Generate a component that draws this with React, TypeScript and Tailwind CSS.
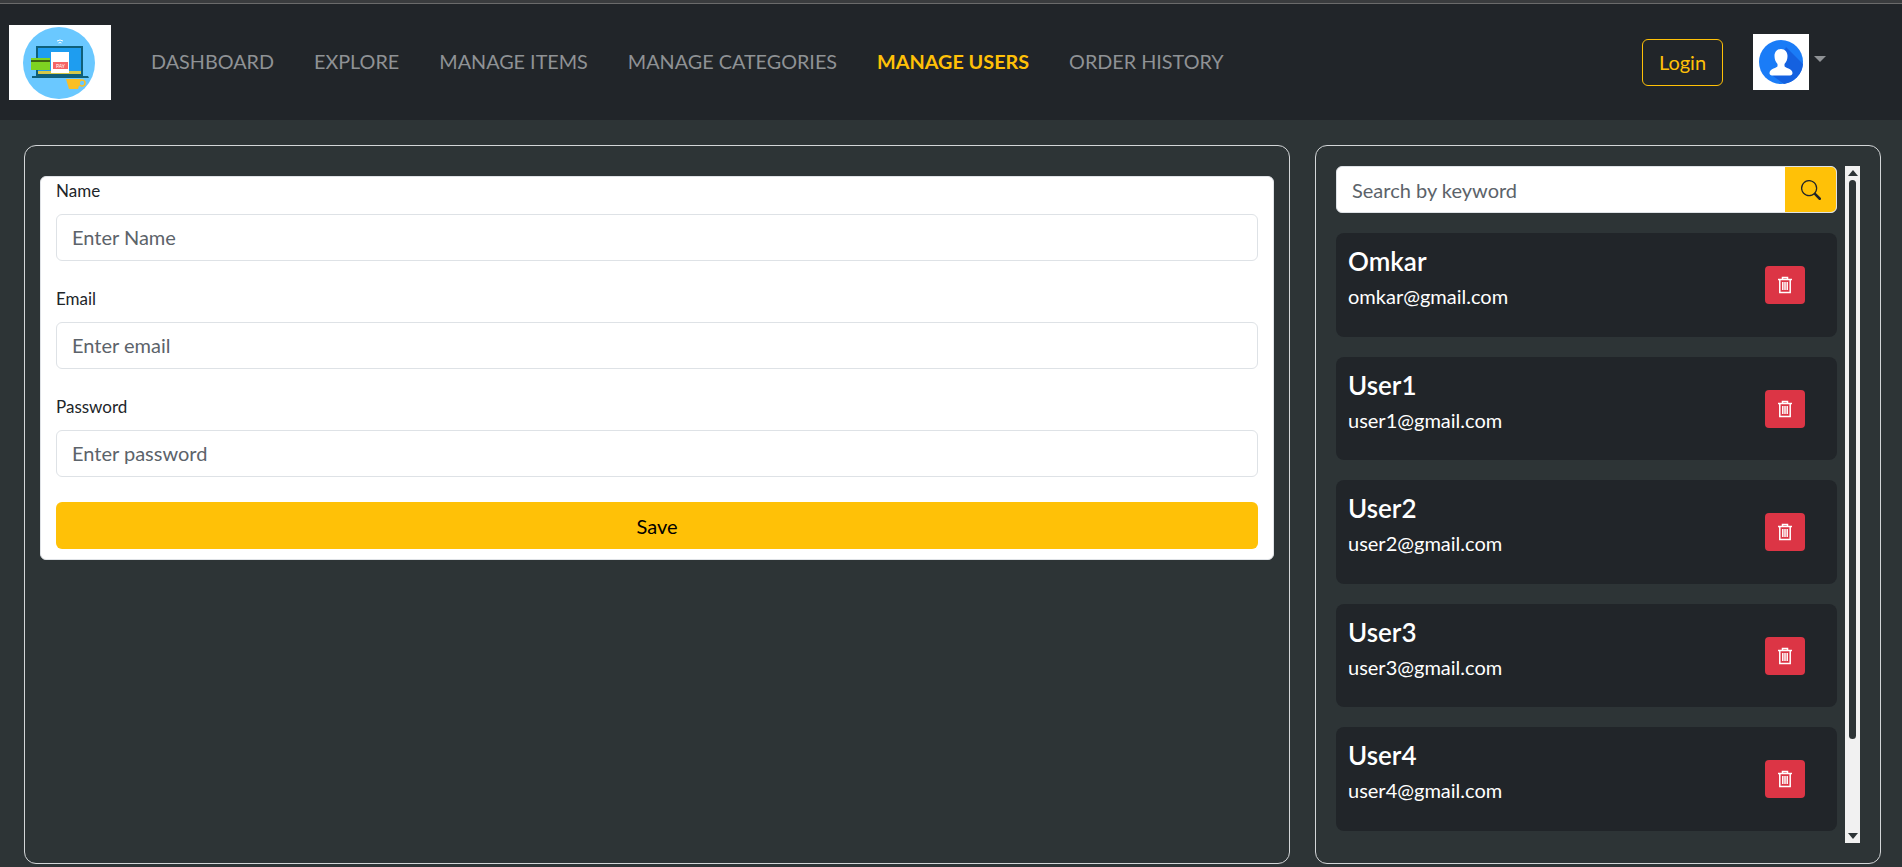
import { BsSearch } from "react-icons/bs";

const navLinks = ["DASHBOARD", "EXPLORE", "MANAGE ITEMS", "MANAGE CATEGORIES", "MANAGE USERS", "ORDER HISTORY"];

const users = [
  { name: "Omkar", email: "omkar@gmail.com" },
  { name: "User1", email: "user1@gmail.com" },
  { name: "User2", email: "user2@gmail.com" },
  { name: "User3", email: "user3@gmail.com" },
  { name: "User4", email: "user4@gmail.com" },
];

const fields = [
  { label: "Name", placeholder: "Enter Name" },
  { label: "Email", placeholder: "Enter email" },
  { label: "Password", placeholder: "Enter password" },
];

function Logo() {
  return (
    <svg viewBox="0 0 102 75" className="w-[102px] h-[75px] bg-white shrink-0">
      <circle cx="50" cy="38" r="36" fill="#6ac8ff" />
      <path d="M48 16q3-2 6 0M49.500 18q1.500-1 3 0" stroke="#fff" strokeWidth="1" fill="none" />
      <rect x="27" y="21" width="47" height="30" fill="#0e5f7a" />
      <rect x="29" y="23" width="43" height="26" fill="#1e9df0" />
      <rect x="29" y="46" width="43" height="3" fill="#d4c84a" />
      <path d="M23 51h56l1 2H23z" fill="#0e5f7a" />
      <rect x="22" y="33" width="19" height="12" fill="#7ed321" />
      <rect x="22" y="35" width="19" height="2" fill="#3f6212" />
      <rect x="42" y="27" width="18" height="21" fill="#fff" />
      <rect x="44" y="37" width="15" height="7" fill="#f56565" />
      <text x="51.500" y="43" fontSize="5" fill="#fff" textAnchor="middle">PAY</text>
      <path d="M57 54h15l-3 10h-9z" fill="#fbbf24" />
      <circle cx="73" cy="58" r="3" stroke="#fbbf24" strokeWidth="1.500" fill="none" />
    </svg>
  );
}

function Avatar() {
  return (
    <svg viewBox="0 0 56 56" className="w-14 h-14 bg-white shrink-0">
      <circle cx="28" cy="28" r="22" fill="#1a7cf7" />
      <path d="M33 13 50 30a22 22 0 0 1-19 20L20 42z" fill="#1461e0" />
      <path d="M28 15c-4 0-6.500 3-6.500 7 0 3 1 6 3 8v2c0 2-8 2.500-8 7 0 1.500 1 2.500 2.500 2.500h18c1.500 0 2.500-1 2.500-2.500 0-4.500-8-5-8-7v-2c2-2 3-5 3-8 0-4-2.500-7-6.500-7z" fill="#fff" />
    </svg>
  );
}

function TrashIcon() {
  return (
    <svg viewBox="0 0 16 18" className="w-4 h-[18px]" fill="none" stroke="#fff" strokeWidth="1.500">
      <path d="M1 3.500h14M5.500 3.500V1.500h5v2M2.800 3.500v13h10.400v-13M5.800 6v8M8 6v8M10.200 6v8" />
    </svg>
  );
}

function UserCard({ name, email }: { name: string; email: string }) {
  return (
    <div className="h-[103.6px] shrink-0 bg-[#212529] rounded-lg pl-3 pr-8 pt-2.5 flex items-start justify-between text-white">
      <div>
        <h5 className="text-[26px] leading-[36px] font-semibold">{name}</h5>
        <p className="text-[20px] leading-[27px] mt-1">{email}</p>
      </div>
      <button className="w-10 h-[38px] mt-[23px] bg-[#dc3545] rounded flex items-center justify-center">
        <TrashIcon />
      </button>
    </div>
  );
}

export default function App() {
  return (
    <div className="h-[867px] overflow-hidden flex flex-col bg-[#2d3436] font-['Lato','Liberation_Sans',sans-serif]">
      <div className="h-[4px] shrink-0 bg-[#3a3c3e] border-b border-[#6b6b6b]" />

      {/* Navbar */}
      <nav className="h-[116px] shrink-0 bg-[#212529] flex items-center pl-[9px] pr-[76px]">
        <Logo />
        <ul className="flex items-center gap-10 ml-10 text-[19.8px] text-[#8f9295]">
          {navLinks.map((link) => (
            <li key={link} className={link === "MANAGE USERS" ? "text-[#ffc107] font-bold" : ""}>
              {link}
            </li>
          ))}
        </ul>
        <div className="ml-auto flex items-center">
          <button className="w-[81px] h-[47px] border border-[#ffc107] rounded-md text-[#ffc107] text-[20px]">Login</button>
          <div className="ml-[30px]">
            <Avatar />
          </div>
          <span className="ml-[5px] w-0 h-0 border-x-[6px] border-x-transparent border-t-[6px] border-t-[#8f9295] -mt-[6px]" />
        </div>
      </nav>

      <main className="flex-1 flex gap-[25px] pt-[25px] pb-[3px] pl-6 pr-[21px] min-h-0">
        {/* Form panel */}
        <section className="w-[1266px] border border-[#d3d6d8] rounded-xl pt-[30px] px-[15px]">
          <form className="bg-white rounded-md h-[384px] px-[15px] border border-[#dfe2e6]">
            {fields.map((f) => (
              <div key={f.label} className="mb-6">
                <label className="block text-[17px] leading-6 pt-0.5 mb-[11px] text-[#212529]">{f.label}</label>
                <input
                  placeholder={f.placeholder}
                  className="w-full h-[47px] px-[15px] pb-0.5 border border-[#dee2e6] rounded-md text-[20px] placeholder:text-[#5c636a] outline-none"
                />
              </div>
            ))}
            <button type="button" className="w-full h-[47px] mt-px bg-[#ffc107] rounded-md text-[20px] text-black">
              Save
            </button>
          </form>
        </section>

        {/* User list panel */}
        <section className="flex-1 border border-[#d3d6d8] rounded-xl p-5 flex gap-2 min-w-0">
          <div className="flex-1 min-w-0 flex flex-col gap-5 overflow-hidden">
            <div className="h-[47px] shrink-0 flex bg-white rounded-md overflow-hidden border border-[#dee2e6]">
              <input placeholder="Search by keyword" className="flex-1 min-w-0 px-[15px] text-[20px] placeholder:text-[#5c636a] outline-none" />
              <button className="w-[51px] bg-[#ffc107] flex items-center justify-center">
                <BsSearch className="w-5 h-5 text-[#212529]" />
              </button>
            </div>
            {users.map((u) => (
              <UserCard key={u.name} name={u.name} email={u.email} />
            ))}
          </div>
          {/* Scrollbar */}
          <div className="w-[15px] shrink-0 bg-[#f1f1f1] flex flex-col items-center py-[4px]">
            <span className="w-0 h-0 border-x-[5px] border-x-transparent border-b-[6px] border-b-[#2d3436]" />
            <span className="w-[7px] h-[559px] mt-[4px] bg-[#2d3436] rounded-full" />
            <span className="mt-auto w-0 h-0 border-x-[5px] border-x-transparent border-t-[6px] border-t-[#2d3436]" />
          </div>
        </section>
      </main>
    </div>
  );
}
